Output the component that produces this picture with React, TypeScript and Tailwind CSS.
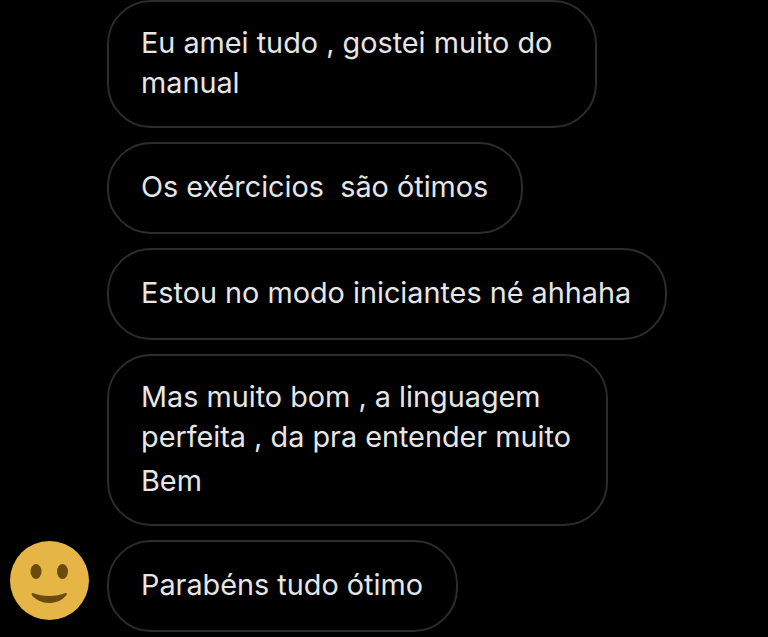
const font = { fontFamily: 'Inter, sans-serif' };

function Bubble({ lines, className }: { lines: string[]; className: string }) {
  return (
    <div className={`box-border rounded-[44px] border-2 border-[#2c2c2c] pl-[32px] flex flex-col justify-center text-[28.8px] leading-[40px] text-[#e6e6e6] whitespace-pre ${className}`}>
      {lines.map((l) => (
        <div key={l}>{l}</div>
      ))}
    </div>
  );
}

function Smiley() {
  return (
    <svg width="80" height="80" viewBox="0 0 80 80" className="mt-px shrink-0">
      <circle cx="39.5" cy="39.5" r="39.5" fill="#e5b646" />
      <ellipse cx="26" cy="30.5" rx="5.5" ry="7.5" fill="#6b4a10" />
      <ellipse cx="52.5" cy="30.5" rx="5.5" ry="7.5" fill="#6b4a10" />
      <path d="M22.5 52 C33 56 46 56 55.5 52 C57 51.5 57 53 56.5 54 C52 60 45 62 39 62 C32 62 26 59 22 54.5 C21.5 53 21.5 51.8 22.5 52 Z" fill="#6b4a10" />
    </svg>
  );
}

export default function App() {
  return (
    <div className="h-[637px] w-[768px] overflow-hidden bg-black" style={font}>
      <div className="flex flex-col gap-[14px] pl-[10px]">
        <div className="pl-[97px]">
          <Bubble lines={['Eu amei tudo , gostei muito do', 'manual']} className="h-[128px] w-[490px] pb-[2px]" />
        </div>
        <div className="pl-[97px]">
          <Bubble lines={['Os exércicios  são ótimos']} className="h-[92px] w-[416px] pb-[2px]" />
        </div>
        <div className="pl-[97px]">
          <Bubble lines={['Estou no modo iniciantes né ahhaha']} className="h-[92px] w-[560px] pb-[2px]" />
        </div>
        <div className="pl-[97px]">
          <Bubble lines={['Mas muito bom , a linguagem', 'perfeita , da pra entender muito', 'Bem']} className="h-[172px] w-[501px] pb-[2px] [&>div:last-child]:mt-[4px]" />
        </div>
        <div className="flex items-start gap-[17px]">
          <Smiley />
          <Bubble lines={['Parabéns tudo ótimo']} className="h-[92px] w-[351px] pb-[2px]" />
        </div>
      </div>
    </div>
  );
}
